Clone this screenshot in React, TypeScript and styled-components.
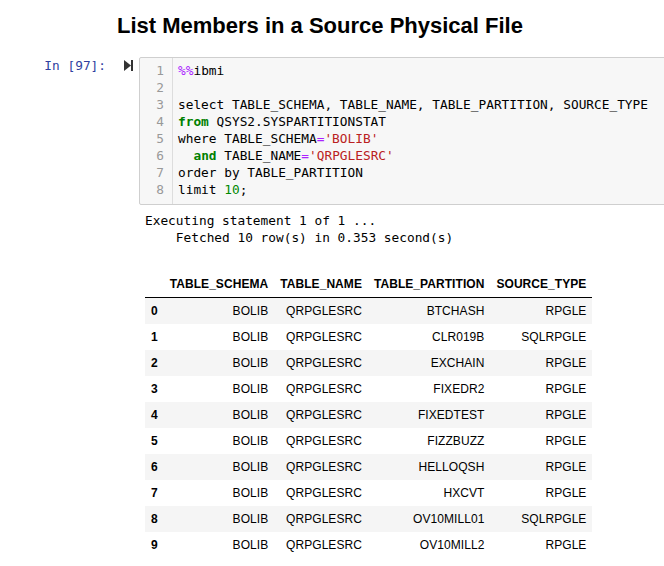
import React from "react";
import styled, { createGlobalStyle } from "styled-components";

const Global = createGlobalStyle`
  html, body { margin: 0; padding: 0; background: #fff; overflow: hidden; }
  body { font-family: "Liberation Sans", Arial, sans-serif; color: #000; }
`;

const MONO = `"DejaVu Sans Mono", "Liberation Mono", monospace`;

const Page = styled.div`
  width: 664px;
  height: 566px;
  overflow: hidden;
`;

const Title = styled.h2`
  margin: 0;
  padding: 13px 0 0 117px;
  height: 44px;
  box-sizing: border-box;
  font-size: 22px;
  font-weight: bold;
  line-height: 26px;
`;

const Cell = styled.div`
  display: flex;
  align-items: flex-start;
`;

const Prompt = styled.div`
  width: 139px;
  flex: none;
  display: flex;
  justify-content: flex-end;
  align-items: center;
  gap: 18px;
  padding: 5px 6px 0 0;
  box-sizing: border-box;
  height: 22px;
`;

const PromptText = styled.span`
  font-family: ${MONO};
  font-size: 12.8px;
  color: #303f9f;
  line-height: 17px;
`;

const RunIcon = styled.svg`
  width: 9px;
  height: 11px;
  display: block;
`;

const CodeBox = styled.div`
  flex: none;
  width: 560px;
  display: flex;
  background: #f7f7f7;
  border: 1px solid #cfcfcf;
  border-radius: 2px;
  margin-top: 13px;
`;

const Gutter = styled.div`
  width: 33px;
  border-right: 1px solid #dddddd;
  padding: 4px 8px 6px 0;
  box-sizing: border-box;
  text-align: right;
  font-family: ${MONO};
  font-size: 12.8px;
  line-height: 17px;
  color: #999;
`;

const Code = styled.pre`
  margin: 0;
  padding: 4px 0 6px 5px;
  font-family: ${MONO};
  font-size: 12.8px;
  line-height: 17px;
  color: #000;
`;

const Tok = styled.span<{ $k: "meta" | "kw" | "str" | "op" | "num" }>`
  color: ${(p) =>
    ({ meta: "#aa22ff", kw: "#008000", str: "#ba2121", op: "#aa22ff", num: "#008800" })[p.$k]};
  font-weight: ${(p) => (p.$k === "kw" ? "bold" : "normal")};
`;

const Output = styled.div`
  padding: 7px 0 0 145px;
`;

const OutText = styled.pre`
  margin: 0;
  font-family: ${MONO};
  font-size: 12.8px;
  line-height: 17px;
  color: #000;
`;

const Table = styled.table`
  margin-top: 25px;
  border-collapse: collapse;
  border-spacing: 0;
  font-size: 12px;
  letter-spacing: 0.06px;
  font-family: "Liberation Sans", Arial, sans-serif;
  color: #000;
`;

const Th = styled.th`
  text-align: right;
  font-weight: bold;
  padding: 6px;
  line-height: 14px;
  white-space: nowrap;
`;

const HeadRow = styled.tr`
  border-bottom: 1px solid #000;
`;

const Row = styled.tr<{ $odd: boolean }>`
  background: ${(p) => (p.$odd ? "#fff" : "#f5f5f5")};
`;

const IndexTh = styled.th`
  text-align: left;
  font-weight: bold;
  padding: 6px;
  line-height: 14px;
`;

const Td = styled.td`
  text-align: right;
  padding: 6px;
  line-height: 14px;
  white-space: nowrap;
`;

const rows: [string, string][] = [
  ["BTCHASH", "RPGLE"],
  ["CLR019B", "SQLRPGLE"],
  ["EXCHAIN", "RPGLE"],
  ["FIXEDR2", "RPGLE"],
  ["FIXEDTEST", "RPGLE"],
  ["FIZZBUZZ", "RPGLE"],
  ["HELLOQSH", "RPGLE"],
  ["HXCVT", "RPGLE"],
  ["OV10MILL01", "SQLRPGLE"],
  ["OV10MILL2", "RPGLE"],
];

export default function App() {
  return (
    <Page>
      <Global />
      <Title>List Members in a Source Physical File</Title>
      <Cell>
        <Prompt style={{ marginTop: 8 }}>
          <PromptText>In [97]:</PromptText>
          <RunIcon viewBox="0 0 9 11">
            <path d="M0 0 L7 5.5 L0 11 Z" fill="#333" />
            <rect x="7" y="0" width="2" height="11" fill="#333" />
          </RunIcon>
        </Prompt>
        <CodeBox>
          <Gutter>
            {[1, 2, 3, 4, 5, 6, 7, 8].map((n) => (
              <div key={n}>{n}</div>
            ))}
          </Gutter>
          <Code>
            <Tok $k="meta">%%</Tok>ibmi{"\n"}
            {"\n"}
            select TABLE_SCHEMA, TABLE_NAME, TABLE_PARTITION, SOURCE_TYPE{"\n"}
            <Tok $k="kw">from</Tok> QSYS2.SYSPARTITIONSTAT{"\n"}
            where TABLE_SCHEMA<Tok $k="op">=</Tok>
            <Tok $k="str">'BOLIB'</Tok>
            {"\n"}
            {"  "}
            <Tok $k="kw">and</Tok> TABLE_NAME<Tok $k="op">=</Tok>
            <Tok $k="str">'QRPGLESRC'</Tok>
            {"\n"}
            order by TABLE_PARTITION{"\n"}
            limit <Tok $k="num">10</Tok>;
          </Code>
        </CodeBox>
      </Cell>
      <Output>
        <OutText>
          {"Executing statement 1 of 1 ...\n    Fetched 10 row(s) in 0.353 second(s)"}
        </OutText>
        <Table>
          <thead>
            <HeadRow>
              <Th></Th>
              <Th>TABLE_SCHEMA</Th>
              <Th>TABLE_NAME</Th>
              <Th>TABLE_PARTITION</Th>
              <Th>SOURCE_TYPE</Th>
            </HeadRow>
          </thead>
          <tbody>
            {rows.map(([part, type], i) => (
              <Row key={i} $odd={i % 2 === 1}>
                <IndexTh>{i}</IndexTh>
                <Td>BOLIB</Td>
                <Td>QRPGLESRC</Td>
                <Td>{part}</Td>
                <Td>{type}</Td>
              </Row>
            ))}
          </tbody>
        </Table>
      </Output>
    </Page>
  );
}
